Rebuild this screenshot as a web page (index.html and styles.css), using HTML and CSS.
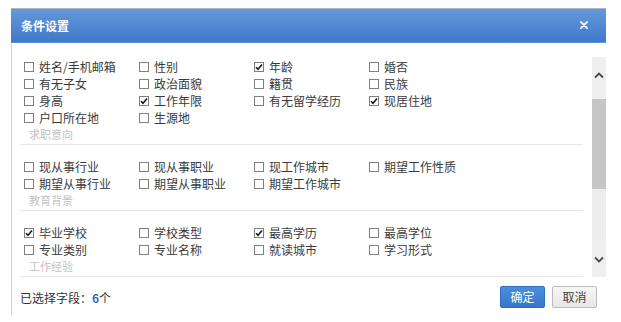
FILE: index.html
```html
<!DOCTYPE html>
<html lang="zh">
<head>
<meta charset="utf-8">
<title>条件设置</title>
<link rel="stylesheet" href="styles.css">
</head>
<body>
<div class="dialog">
  <div class="dlg-head">
    <span class="dlg-title">条件设置</span>
    <span class="dlg-close"><svg width="8" height="8" viewBox="0 0 8 8"><path d="M1 1L7 7M7 1L1 7" stroke="#e4edf9" stroke-width="2" stroke-linecap="round"/></svg></span>
  </div>
  <div class="dlg-body">
    <div class="scroll-wrap">
      <div class="scroll-content">
        <div class="section first">
          <div class="grid">
            <label class="opt"><span class="cb"></span>姓名/手机邮箱</label>
            <label class="opt"><span class="cb"></span>性别</label>
            <label class="opt"><span class="cb on"><svg width="8" height="8" viewBox="0 0 8 8"><path d="M1 4.2L3 6.3L7 1.5" fill="none" stroke="#1a1a1a" stroke-width="1.6"/></svg></span>年龄</label>
            <label class="opt"><span class="cb"></span>婚否</label>
            <label class="opt"><span class="cb"></span>有无子女</label>
            <label class="opt"><span class="cb"></span>政治面貌</label>
            <label class="opt"><span class="cb"></span>籍贯</label>
            <label class="opt"><span class="cb"></span>民族</label>
            <label class="opt"><span class="cb"></span>身高</label>
            <label class="opt"><span class="cb on"><svg width="8" height="8" viewBox="0 0 8 8"><path d="M1 4.2L3 6.3L7 1.5" fill="none" stroke="#1a1a1a" stroke-width="1.6"/></svg></span>工作年限</label>
            <label class="opt"><span class="cb"></span>有无留学经历</label>
            <label class="opt"><span class="cb on"><svg width="8" height="8" viewBox="0 0 8 8"><path d="M1 4.2L3 6.3L7 1.5" fill="none" stroke="#1a1a1a" stroke-width="1.6"/></svg></span>现居住地</label>
            <label class="opt"><span class="cb"></span>户口所在地</label>
            <label class="opt"><span class="cb"></span>生源地</label>
          </div>
          <div class="sec-label">求职意向</div>
        </div>
        <div class="section">
          <div class="grid">
            <label class="opt"><span class="cb"></span>现从事行业</label>
            <label class="opt"><span class="cb"></span>现从事职业</label>
            <label class="opt"><span class="cb"></span>现工作城市</label>
            <label class="opt"><span class="cb"></span>期望工作性质</label>
            <label class="opt"><span class="cb"></span>期望从事行业</label>
            <label class="opt"><span class="cb"></span>期望从事职业</label>
            <label class="opt"><span class="cb"></span>期望工作城市</label>
          </div>
          <div class="sec-label">教育背景</div>
        </div>
        <div class="section">
          <div class="grid">
            <label class="opt"><span class="cb on"><svg width="8" height="8" viewBox="0 0 8 8"><path d="M1 4.2L3 6.3L7 1.5" fill="none" stroke="#1a1a1a" stroke-width="1.6"/></svg></span>毕业学校</label>
            <label class="opt"><span class="cb"></span>学校类型</label>
            <label class="opt"><span class="cb on"><svg width="8" height="8" viewBox="0 0 8 8"><path d="M1 4.2L3 6.3L7 1.5" fill="none" stroke="#1a1a1a" stroke-width="1.6"/></svg></span>最高学历</label>
            <label class="opt"><span class="cb"></span>最高学位</label>
            <label class="opt"><span class="cb"></span>专业类别</label>
            <label class="opt"><span class="cb"></span>专业名称</label>
            <label class="opt"><span class="cb"></span>就读城市</label>
            <label class="opt"><span class="cb"></span>学习形式</label>
          </div>
          <div class="sec-label">工作经验</div>
        </div>
      </div>
      <div class="vscroll">
        <div class="vs-btn vs-up"><svg width="10" height="7" viewBox="0 0 10 7"><path d="M1 5.5L5 1.5L9 5.5" fill="none" stroke="#4a4a4a" stroke-width="1.8"/></svg></div>
        <div class="vs-thumb"></div>
        <div class="vs-track-bottom"></div>
        <div class="vs-btn vs-down"><svg width="10" height="7" viewBox="0 0 10 7"><path d="M1 1.5L5 5.5L9 1.5" fill="none" stroke="#4a4a4a" stroke-width="1.8"/></svg></div>
      </div>
    </div>
    <div class="dlg-foot">
      <div class="count">已选择字段：<b class="num">6</b>个</div>
      <div class="btns">
        <button class="btn btn-ok">确定</button>
        <button class="btn btn-cancel">取消</button>
      </div>
    </div>
  </div>
</div>
</body>
</html>
```

FILE: styles.css
```css
* { box-sizing: border-box; }
html, body { margin: 0; padding: 0; background: #fff; }
body {
  font-family: "Noto Sans CJK SC", "Liberation Sans", sans-serif;
  font-size: 12px;
  color: #3a3a3a;
  width: 621px;
  height: 322px;
  overflow: hidden;
}
.dialog {
  margin: 8px 0 0 11px;
  width: 595px;
}
.dlg-head {
  height: 35px;
  display: flex;
  align-items: center;
  justify-content: space-between;
  padding: 0 18px 2px 10px;
  background: linear-gradient(#6398da, #4079c9);
  border-top: 1px solid #a9b8cb;
  border-bottom: 1px solid #5a93de;
}
.dlg-title {
  color: #fff;
  font-weight: bold;
  font-size: 12px;
  line-height: 14px;
  padding-top: 2px;
}
.dlg-close { display: flex; align-items: center; }
.dlg-body {
  border-left: 1px solid #d2d2d2;
  height: 272px;
}
.scroll-wrap {
  display: flex;
  height: 234px;
}
.scroll-content {
  flex: 1;
  overflow: hidden;
}
.section {
  margin: 0 9px 0 8px;
  padding-top: 13px;
  border-bottom: 1px solid #e6e6e6;
}
.section.first { padding-top: 15px; }
.grid {
  display: grid;
  grid-template-columns: repeat(4, 115px);
  padding-left: 4px;
}
.opt {
  display: flex;
  align-items: center;
  height: 17px;
  line-height: 17px;
  white-space: nowrap;
  color: #3a3a3a;
}
.cb {
  width: 10px;
  height: 10px;
  border: 1px solid #808080;
  background: #fff;
  margin-right: 5px;
  display: flex;
  align-items: center;
  justify-content: center;
  flex: none;
}
.sec-label {
  height: 18px;
  line-height: 17px;
  padding-left: 9px;
  font-size: 11px;
  color: #c2c2c2;
}
.vscroll {
  width: 14px;
  margin-top: 14px;
  height: 220px;
  display: flex;
  flex-direction: column;
  background: #ececec;
}
.vs-btn {
  display: flex;
  align-items: center;
  justify-content: center;
  background: #efefef;
}
.vs-up { height: 42px; padding-bottom: 6px; }
.vs-down { height: 36px; }
.vs-thumb { height: 90px; background: #c6c6c6; }
.vs-track-bottom { flex: 1; background: #ededed; }
.dlg-foot {
  height: 38px;
  display: flex;
  align-items: center;
  justify-content: space-between;
  padding: 2px 9px 0 8px;
}
.count { color: #333; }
.num { color: #2f6fc2; font-weight: bold; }
.btns { display: flex; gap: 7px; }
.btn {
  width: 45px;
  height: 22px;
  padding: 0;
  font-family: "Noto Sans CJK SC", "Liberation Sans", sans-serif;
  font-size: 12px;
  line-height: 20px;
  border-radius: 2px;
}
.btn-ok {
  background: linear-gradient(#4a8fdc, #3677cb);
  border: 1px solid #2f6cbc;
  color: #fff;
}
.btn-cancel {
  background: linear-gradient(#f7f7f7, #e6e6e6);
  border: 1px solid #bcbcbc;
  color: #444;
}
```
